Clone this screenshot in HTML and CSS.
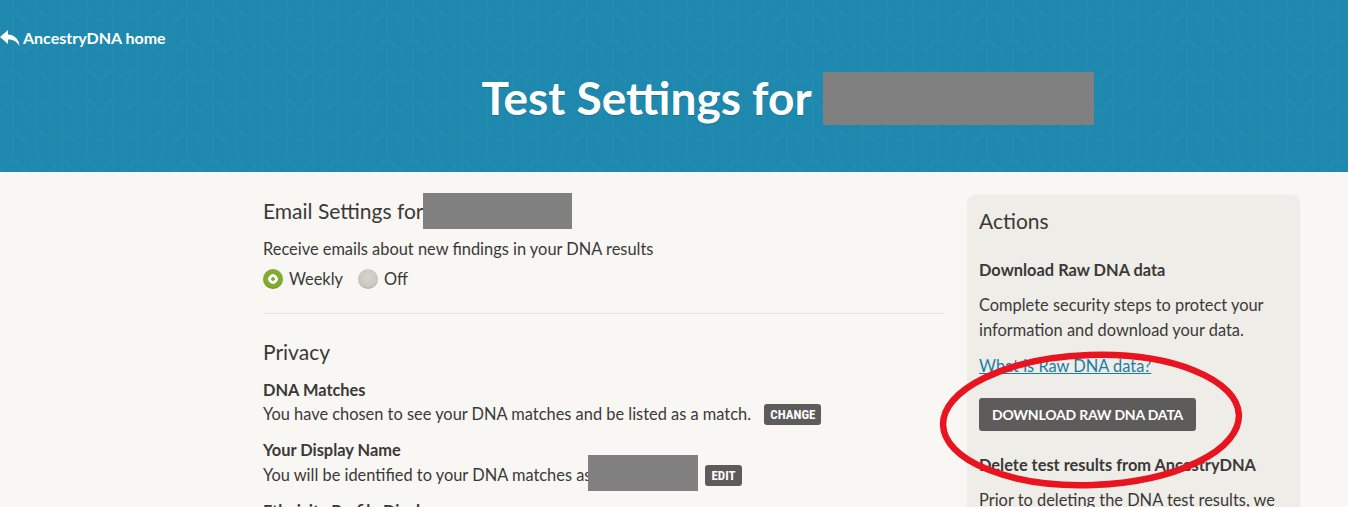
FILE: index.html
```html
<!DOCTYPE html>
<html lang="en">
<head>
<meta charset="utf-8">
<title>Test Settings</title>
<link rel="stylesheet" href="styles.css">
</head>
<body>
<header class="hero">
  <a class="home-link" href="#">
    <svg class="home-icon" viewBox="0 0 20 16" width="20" height="16" aria-hidden="true">
      <path d="M8 0 L0 7 L8 14 L8 9.5 C13 9.5 16.5 11 19.5 16 C19 9.5 15 5 8 4.5 Z" fill="#fff"/>
    </svg>
    <span>AncestryDNA home</span>
  </a>
  <div class="hero-inner">
    <h1 class="hero-title">Test Settings for <span class="redact redact-title"></span></h1>
  </div>
</header>

<div class="page">
  <main class="main-col">
    <section class="block">
      <h2 class="section-title">Email Settings for <span class="redact redact-email"></span></h2>
      <p class="text">Receive emails about new findings in your DNA results</p>
      <div class="radios">
        <label class="radio"><span class="dot dot-on"></span>Weekly</label>
        <label class="radio"><span class="dot dot-off"></span>Off</label>
      </div>
    </section>
    <hr class="divider">
    <section class="block">
      <h2 class="section-title privacy">Privacy</h2>
      <div class="setting">
        <h3 class="label">DNA Matches</h3>
        <p class="text text-row">You have chosen to see your DNA matches and be listed as a match. <button class="tag tag-change">CHANGE</button></p>
      </div>
      <div class="setting">
        <h3 class="label">Your Display Name</h3>
        <p class="text text-row">You will be identified to your DNA matches as<span class="redact redact-name"></span><button class="tag tag-edit">EDIT</button></p>
      </div>
      <div class="setting">
        <h3 class="label">Ethnicity Profile Display</h3>
      </div>
    </section>
  </main>

  <aside class="actions">
    <h2 class="section-title">Actions</h2>
    <h3 class="label label-side">Download Raw DNA data</h3>
    <p class="text text-side">Complete security steps to protect your information and download your data.</p>
    <a class="link" href="#">What is Raw DNA data?</a>
    <button class="btn-download">DOWNLOAD RAW DNA DATA</button>
    <h3 class="label label-side">Delete test results from AncestryDNA</h3>
    <p class="text text-side">Prior to deleting the DNA test results, we</p>
    <svg class="circle-mark" viewBox="0 0 320 150" width="320" height="150" aria-hidden="true">
      <ellipse cx="154" cy="75" rx="148" ry="65" fill="none" stroke="#e8141f" stroke-width="6.5" transform="rotate(-2 154 75)"/>
    </svg>
  </aside>
</div>
</body>
</html>
```

FILE: styles.css
```css
* { box-sizing: border-box; }

html, body {
  margin: 0;
  padding: 0;
}

body {
  background: #f8f7f3;
  color: #3a3937;
  font-family: "Source Sans Pro", Lato, "Noto Sans", sans-serif;
  font-size: 16.4px;
  overflow: hidden;
  height: 507px;
}

/* header band with a faint knitted chevron texture */
.hero {
  position: relative;
  height: 172px;
  background-color: #1e88ae;
  background-image: url("data:image/svg+xml;utf8,<svg xmlns='http://www.w3.org/2000/svg' width='25' height='30'><path d='M0 22 L12.5 8 L25 22' stroke='%23228bb0' stroke-width='2' fill='none'/><path d='M12.5 0 V30 M0 0 V30' stroke='%23228bb0' stroke-width='1.5'/></svg>");
  background-size: 25px 30px;
}

.home-link {
  position: absolute;
  left: 0;
  top: 28px;
  display: flex;
  align-items: center;
  gap: 3px;
  color: #fff;
  text-decoration: none;
  font-weight: 700;
  font-size: 16px;
}

.home-icon { display: block; }

.hero-inner {
  margin-left: 263px;
  width: 1036px;
  display: flex;
  justify-content: center;
  padding-top: 71px;
  padding-left: 13px;
}

.hero-title {
  margin: 0;
  color: #fff;
  font-size: 46px;
  font-weight: 700;
  line-height: 54px;
  display: flex;
  align-items: center;
  gap: 11px;
  text-shadow: 0 1px 1px rgba(0, 0, 0, 0.15);
}

.redact {
  display: inline-block;
  background: #808080;
}

.redact-title { width: 271px; height: 53px; }
.redact-email { width: 149px; height: 36px; }
.redact-name { width: 110px; height: 36px; margin: -10px 7px -6px -3px; }

.page {
  display: flex;
  gap: 22px;
  margin-left: 263px;
  width: 1036px;
}

.main-col {
  width: 682px;
  padding-top: 21px;
}

.section-title {
  margin: 0;
  font-weight: 400;
  font-size: 21px;
  line-height: 36px;
  display: flex;
  align-items: center;
}

.text {
  margin: 0;
  line-height: 25px;
}

.text-row {
  display: flex;
  align-items: center;
  white-space: pre;
}

.block > .text { margin-top: 7px; }

.radios {
  display: flex;
  gap: 15px;
  margin-top: 6px;
  line-height: 24px;
}

.radio {
  display: flex;
  align-items: center;
  gap: 6px;
}

.dot {
  width: 20px;
  height: 20px;
  border-radius: 50%;
  display: inline-block;
}

.dot-on {
  background: radial-gradient(circle, #7eac2c 0 1.5px, #fff 2px 4.5px, #80ad2e 5px);
  box-shadow: inset 0 -1px 1px rgba(0, 0, 0, 0.15);
}

.dot-off {
  background: radial-gradient(circle at 50% 40%, #d6d4cf, #c2bfba);
  box-shadow: inset 0 -1px 1px rgba(0, 0, 0, 0.12);
}

.divider {
  border: 0;
  border-top: 1px solid #e6e4de;
  margin: 22px 0 0;
}

.privacy { margin-top: 20px; }

.label {
  margin: 0;
  font-size: 16.4px;
  font-weight: 700;
  line-height: 24px;
}

.privacy + .setting { margin-top: 8px; }
.privacy + .setting .text-row { margin-top: -1px; }
.setting + .setting { margin-top: 12px; }

.tag {
  display: inline-block;
  border: 0;
  border-radius: 3px;
  background: #5e5c5a;
  color: #fff;
  font-family: "Liberation Sans Narrow", "Roboto Condensed", Roboto, sans-serif;
  font-weight: 700;
  font-size: 13px;
  line-height: 21px;
  padding: 0 6px;
  margin-left: 9px;
}

.tag-change { margin-top: 2px; }
.tag-edit { margin-left: 0; margin-top: 2px; }

.actions {
  position: relative;
  width: 332px;
  margin-top: 23px;
  height: 330px;
  background: #efede8;
  border-radius: 8px;
  padding: 8px 12px 0;
  box-shadow: 1px 0 2px rgba(0, 0, 0, 0.06);
}

.label-side { margin-top: 19px; }

.text-side { margin-top: 10px; max-width: 300px; }

.link {
  display: inline-block;
  margin-top: 12px;
  color: #1a7ca3;
  line-height: 24px;
}

.btn-download {
  display: block;
  margin-top: 20px;
  border: 0;
  border-radius: 3px;
  background: #5e5c5a;
  color: #fff;
  font-family: inherit;
  font-weight: 700;
  font-size: 14px;
  letter-spacing: -0.2px;
  height: 33px;
  padding: 0 13px;
}

.actions .btn-download + .label-side { margin-top: 22px; }

/* red annotation ring drawn over the download area */
.circle-mark {
  position: absolute;
  left: -30px;
  top: 150px;
  pointer-events: none;
}
```
